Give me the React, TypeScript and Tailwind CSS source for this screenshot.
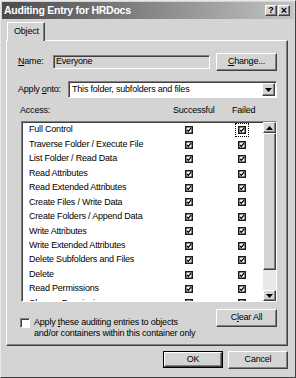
const font = "font-['Liberation_Sans',Arial,sans-serif]";

const permissions = [
  "Full Control",
  "Traverse Folder / Execute File",
  "List Folder / Read Data",
  "Read Attributes",
  "Read Extended Attributes",
  "Create Files / Write Data",
  "Create Folders / Append Data",
  "Write Attributes",
  "Write Extended Attributes",
  "Delete Subfolders and Files",
  "Delete",
  "Read Permissions",
  "Change Permissions",
];

const raised =
  "border border-t-white border-l-white border-r-[#404040] border-b-[#404040] shadow-[inset_-1px_-1px_0_#808080]";
const sunken =
  "border border-t-[#808080] border-l-[#808080] border-r-white border-b-white shadow-[inset_1px_1px_0_#404040]";

function Check() {
  return (
    <svg width="8" height="8" viewBox="0 0 8 8" className="block">
      <rect x="0.75" y="0.75" width="6.5" height="6.5" fill="#fff" stroke="#1a1a1a" strokeWidth="1.5" />
      <path d="M2 3.8 L3.3 5.4 L6 2.2" fill="none" stroke="#000" strokeWidth="1.3" />
    </svg>
  );
}

function Arrow({ up }: { up?: boolean }) {
  return (
    <svg width="7" height="4" viewBox="0 0 7 4" className="block">
      <path d={up ? "M0 4 L3.5 0 L7 4 Z" : "M0 0 L7 0 L3.5 4 Z"} fill="#000" />
    </svg>
  );
}

function Button({ children, wide, isDefault }: { children: React.ReactNode; wide: string; isDefault?: boolean }) {
  const inner = (
    <div className={`${raised} ${wide} h-full bg-[#d4d4d4] flex items-center justify-center text-black`}>
      {children}
    </div>
  );
  if (isDefault) return <div className="border border-black h-[17px]">{inner}</div>;
  return <div className="h-[18px]">{inner}</div>;
}

export default function App() {
  return (
    <div
      className={`${font} w-[296px] h-[378px] bg-[#d4d4d4] border border-t-[#e8e8e8] border-l-[#e8e8e8] border-r-[#404040] border-b-[#404040] p-[1px] flex flex-col text-black text-[9px] tracking-[-0.2px]`}
    >
      <div className="h-[17px] bg-gradient-to-r from-[#4c4c4c] to-[#c4c4c4] flex items-center pl-[2px] pr-[3px]">
        <span className="flex-1 text-[10.5px] tracking-[-0.25px] font-bold text-white leading-none">Auditing Entry for HRDocs</span>
        <div className="flex gap-[1px] mr-[1px] tracking-normal">
          <div className={`${raised} w-[12px] h-[11px] bg-[#d4d4d4] flex items-center justify-center text-[9px] font-bold leading-none`}>?</div>
          <div className={`${raised} w-[12px] h-[11px] bg-[#d4d4d4] flex items-center justify-center text-[11px] font-bold leading-none`}>×</div>
        </div>
      </div>

      <div className="pl-[4px] pr-[6px] pt-[3px] flex flex-col">
        <div className="flex">
          <div className="ml-[1px] w-[38px] h-[19px] border-t border-l border-t-white border-l-white border-r border-r-[#404040] shadow-[inset_-1px_0_0_#808080] flex items-center pl-[6px] relative z-10 bg-[#d4d4d4] -mb-px">
            Object
          </div>
        </div>
        <div className="h-[306px] border border-t-white border-l-white border-r-[#404040] border-b-[#404040] shadow-[inset_-1px_-1px_0_#808080] pt-[12px] pl-[11px] pr-[10px] flex flex-col">
          <div className="flex items-center h-[18px]">
            <span className="w-[35px]">
              <u>N</u>ame:
            </span>
            <div className={`${sunken} w-[157px] h-[14px] flex items-center pl-[2px]`}>Everyone</div>
            <div className="ml-[6px]">
              <Button wide="w-[61px]">
                <span>
                  <u>C</u>hange...
                </span>
              </Button>
            </div>
          </div>

          <div className="flex items-center h-[17px] mt-[10px]">
            <span className="w-[50px] whitespace-nowrap">
              Apply <u>o</u>nto:
            </span>
            <div className={`${sunken} w-[209px] h-[17px] bg-white flex items-center pl-[3px]`}>
              <span className="flex-1">This folder, subfolders and files</span>
              <div className={`${raised} w-[13px] h-[13px] bg-[#d4d4d4] mr-[1px] flex items-center justify-center`}>
                <Arrow />
              </div>
            </div>
          </div>

          <div className="grid grid-cols-[153px_40px_19px_auto] h-[14px] items-center mt-[6px] pl-[2px]">
            <span>Access:</span>
            <span className="text-center">Successful</span>
            <span />
            <span>Failed</span>
          </div>

          <div className={`${sunken} mt-[3px] ml-[3px] h-[181px] bg-white flex`}>
            <div className="flex-1 overflow-hidden pt-[1px] pl-[7px]">
              {permissions.map((p, i) => (
                <div key={p} className="flex items-center h-[14.45px]">
                  <span className="w-[150px] whitespace-nowrap">{p}</span>
                  <div className="w-[20px] flex justify-center">
                    <Check />
                  </div>
                  <div className="w-[33px]" />
                  <div className="w-[20px] flex justify-center">
                    {i === 0 ? (
                      <div className="p-[2px] outline-1 outline-dotted outline-black">
                        <Check />
                      </div>
                    ) : (
                      <Check />
                    )}
                  </div>
                </div>
              ))}
            </div>
            <div className="w-[13px] flex flex-col bg-[#e6e6e6]">
              <div className={`${raised} h-[11px] bg-[#d4d4d4] flex items-center justify-center`}>
                <Arrow up />
              </div>
              <div className={`${raised} h-[137px] bg-[#d4d4d4]`} />
              <div className="flex-1 bg-[#e8e8e8]" />
              <div className={`${raised} h-[11px] bg-[#d4d4d4] flex items-center justify-center`}>
                <Arrow />
              </div>
            </div>
          </div>

          <div className="flex mt-[7px]">
            <div className="flex flex-1 pt-[9px] pl-[2px]">
              <div className={`${sunken} w-[10px] h-[10px] bg-white shrink-0`} />
              <span className="ml-[4px] -mt-[1px] leading-[11px] whitespace-nowrap">
                Apply <u>t</u>hese auditing entries to objects
                <br />
                and/or containers within this container only
              </span>
            </div>
            <Button wide="w-[61px]">
              <span>
                C<u>l</u>ear All
              </span>
            </Button>
          </div>
        </div>

        <div className="flex justify-end gap-[5px] mt-[5px]">
          <Button wide="w-[58px]" isDefault>
            OK
          </Button>
          <Button wide="w-[60px]">Cancel</Button>
        </div>
      </div>
    </div>
  );
}
